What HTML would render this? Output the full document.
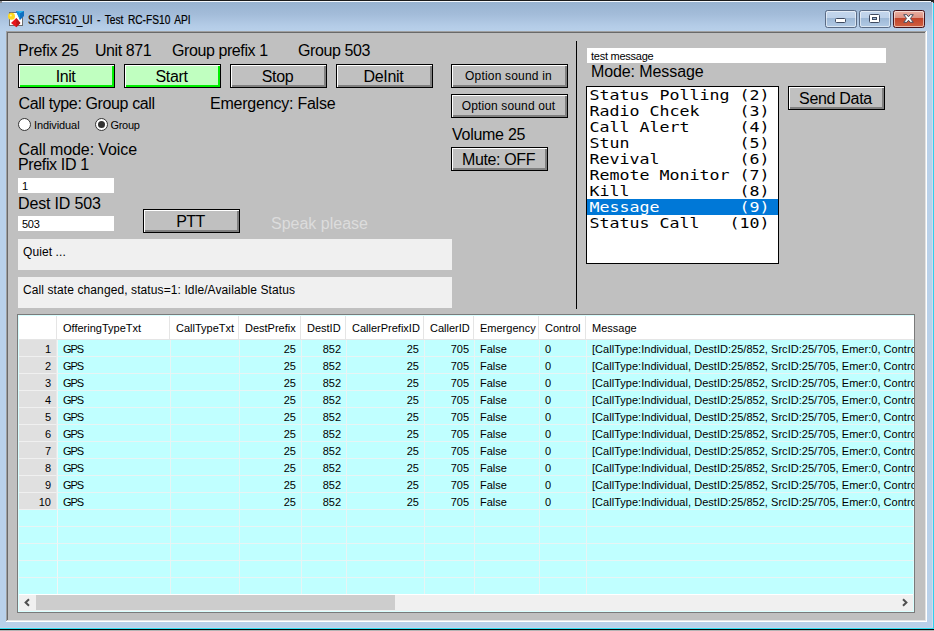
<!DOCTYPE html><html><head><meta charset="utf-8"><title>S.RCFS10_UI - Test RC-FS10 API</title><style>
*{box-sizing:border-box}
html,body{margin:0;padding:0}
body{width:934px;height:631px;overflow:hidden;position:relative;background:#b9d1ea;font-family:"Liberation Sans",sans-serif;color:#000}
.a{position:absolute}
#frame{left:0;top:0;width:934px;height:631px;background:#b9d1ea}
#tgrad{left:0;top:2px;width:933px;height:30px;background:linear-gradient(#98b3d0 0,#a3bcd9 40%,#b4cce7 80%,#b9d1ea 100%)}
#title{left:28px;top:13px;font-size:12px;line-height:15px;white-space:pre;transform-origin:0 50%;transform:scaleX(.848);word-spacing:2px;-webkit-text-stroke:.2px #000}
#client{left:8px;top:33px;width:917px;height:587px;background:#c0c0c0}
.l16{font-size:16px;line-height:18px;white-space:pre}
.btn{padding-right:2px;border:1px solid #000;background:#c0c0c0;font-size:16px;text-align:center;white-space:pre;box-shadow:inset 1px 1px 0 #fff,inset -2px -2px 0 #808080;line-height:20px;padding-top:2px}
.btn.g{background:#c0ffc0;box-shadow:inset 1px 1px 0 #fff,inset -2px -2px 0 #00f000}
.btn.s{font-size:12px;line-height:20px;padding-top:1px}
.tb{background:#fff;font-size:11px;letter-spacing:-.25px;line-height:15px;padding:1px 0 0 4px;white-space:pre;overflow:hidden}
.pnl{background:#f0f0f0;font-size:12px;line-height:14px;padding:6px 0 0 5px;white-space:pre;letter-spacing:.1px}
.rad{width:13px;height:13px;border-radius:50%;background:#fff;border:1px solid #333}
.rad.on::after{content:"";position:absolute;left:2px;top:2px;width:7px;height:7px;border-radius:50%;background:#333}
.rl{font-size:11px;line-height:13px;white-space:pre}
#lb{left:586px;top:86px;width:193px;height:178px;border:1px solid #000;background:#fff;overflow:hidden}
.li{position:absolute;left:0;width:191px;height:16px;font-family:"DejaVu Sans Mono","Liberation Mono",monospace;font-size:13.5px;line-height:16px;white-space:pre}
.li span{display:inline-block;transform-origin:0 50%;transform:scaleX(1.2305);padding-left:2px}
.li.sel{background:#0078d7;color:#fff}
#grid{left:17px;top:314px;width:898px;height:299px;border:1px solid #7a7a7a;background:#c0ffff;overflow:hidden;font-size:11px}
#grid .in{position:absolute;left:0;top:0;width:896px;height:297px;border:1px solid #d8ffff}
.hc{position:absolute;top:1px;height:24px;background:#fff;border-right:1px solid #e5e5e5;border-bottom:1px solid #e5e5e5;line-height:13px;padding:6px 0 0 6px;white-space:pre;overflow:hidden}
.rh{position:absolute;left:1px;width:38px;height:17px;background:#e0e0e0;border-right:1px solid #e8e8e8;border-bottom:1px solid #f0f0f0;text-align:right;padding:3px 5px 0 0;line-height:13px}
.c{position:absolute;height:17px;border-right:1px solid #e8f4f4;border-bottom:1px solid #e8f4f4;line-height:13px;padding:3px 5px 0 5px;white-space:pre;overflow:hidden}
.c.f{border-left:1px solid #f2f6f6}
.c.gps{letter-spacing:-1.1px}
.c.m{letter-spacing:.03px}
.c.r{text-align:right}
#sb{left:1px;top:279px;width:894px;height:17px;background:#f0f0f0;border-top:1px solid #fff}
#thumb{left:17px;top:0;width:359px;height:15px;background:#cdcdcd}
.cb{top:10px;width:32px;height:18px;border-radius:2.5px;border:1px solid #5a6b85;overflow:hidden}
.cb .hl{position:absolute;left:0;top:0;right:0;bottom:0;border:1px solid rgba(255,255,255,.55);border-radius:2px}
.cb.b{background:linear-gradient(#c3d6ec 0,#bdd1e9 44%,#9db8d6 45%,#b2cae5 100%)}
.cb.x{border-color:#47141c;background:linear-gradient(#eab0a3 0,#dc9080 44%,#c2432a 45%,#cf6142 100%)}
</style></head><body>
<div id="frame" class="a"></div>
<div id="tgrad" class="a"></div>
<div class="a" style="left:0;top:0;width:934px;height:1px;background:#1a1a1a"></div>
<div class="a" style="left:2px;top:1px;width:929px;height:1px;background:#f4f8fc"></div>
<div class="a" style="left:931px;top:1px;width:3px;height:1px;background:#2a2a2a"></div>
<div class="a" style="left:932px;top:2px;width:2px;height:1px;background:#3a3a3a"></div>
<div class="a" style="left:0;top:1px;width:2px;height:2px;background:#8a8f96"></div>
<div class="a" style="left:932px;top:2px;width:1px;height:626px;background:#cfdcee"></div>
<div class="a" style="left:933px;top:3px;width:1px;height:626px;background:#2fd0ee"></div>
<div class="a" style="left:0;top:627px;width:933px;height:1px;background:#c6d2ea"></div>
<div class="a" style="left:0;top:628px;width:934px;height:1px;background:#30dff2"></div>
<div class="a" style="left:0;top:629px;width:934px;height:1px;background:#050505"></div>
<div class="a" style="left:0;top:630px;width:934px;height:1px;background:#b4b4b4"></div>
<div class="a" style="left:6px;top:31px;width:921px;height:591px;background:#fff"></div>
<div class="a" style="left:6px;top:31px;width:920px;height:590px;background:#a0a0a0"></div>
<div class="a" style="left:7px;top:32px;width:919px;height:589px;background:#e3e3e3"></div>
<div class="a" style="left:7px;top:32px;width:918px;height:588px;background:#696969"></div>
<div id="client" class="a"></div>
<svg class="a" style="left:7px;top:10px" width="18" height="18" viewBox="0 0 18 18">
<rect x="2.5" y="2.5" width="13" height="13" fill="#fff" stroke="#6e6e6e"/>
<circle cx="4.5" cy="6.3" r="3.5" fill="#ffd91e"/><circle cx="3.8" cy="5.4" r="1" fill="#fff6b0"/>
<polygon points="9,1 17,1 17,6 13,10" fill="#0f6fc0"/><polygon points="9,1 17,1 13,3.2" fill="#2cb5ea"/><polygon points="9,1 13,3.2 13,10" fill="#1493dc"/>
<polygon points="9.3,8 13.4,13 9.3,17.3 4,13" fill="#e8141c"/><polygon points="9.3,8 13.4,13 9.3,17.3" fill="#b8161a"/>
</svg>
<div id="title" class="a">S.RCFS10_UI - Test RC-FS10 API</div>
<div class="a cb b" style="left:825px"><div class="hl"></div><svg class="a" style="left:9px;top:7px" width="13" height="7"><rect x="0.5" y="0.5" width="10" height="4" rx="1" fill="#fff" stroke="#3e4a60"/></svg></div>
<div class="a cb b" style="left:859px"><div class="hl"></div><svg class="a" style="left:9px;top:3px" width="13" height="11"><rect x="0.5" y="0.5" width="10" height="8" rx="1" fill="#fff" stroke="#3e4a60"/><rect x="3.5" y="3.5" width="4" height="2" fill="#9db8d6" stroke="#3e4a60"/></svg></div>
<div class="a cb x" style="left:893px"><div class="hl"></div><svg class="a" style="left:9px;top:3px" width="13" height="11" viewBox="0 0 13 11"><path d="M0.7 0.7 L3.9 0.7 L5.5 2.8 L7.1 0.7 L10.3 0.7 L7.4 4.5 L10.3 8.3 L7.1 8.3 L5.5 6.2 L3.9 8.3 L0.7 8.3 L3.6 4.5 Z" fill="#fff" stroke="#4a4f60" stroke-width="1" stroke-linejoin="round"/></svg></div>
<div class="a l16" style="left:18px;top:42px;letter-spacing:-0.29px;">Prefix 25</div>
<div class="a l16" style="left:95px;top:42px;letter-spacing:-0.43px;">Unit 871</div>
<div class="a l16" style="left:172px;top:42px;letter-spacing:-0.41px;">Group prefix 1</div>
<div class="a l16" style="left:298px;top:42px;letter-spacing:-0.4px;">Group 503</div>
<div class="a btn g" style="left:18px;top:64px;width:97px;height:24px;letter-spacing:-0.45px">Init</div>
<div class="a btn g" style="left:124px;top:64px;width:97px;height:24px;letter-spacing:-0.37px">Start</div>
<div class="a btn " style="left:230px;top:64px;width:97px;height:24px;letter-spacing:-0.3px">Stop</div>
<div class="a btn " style="left:336px;top:64px;width:97px;height:24px;letter-spacing:-0.3px">DeInit</div>
<div class="a l16" style="left:18.5px;top:95px;letter-spacing:-0.375px;">Call type: Group call</div>
<div class="a l16" style="left:210px;top:95px;letter-spacing:-0.22px;">Emergency: False</div>
<div class="a rad" style="left:18px;top:118px"></div><div class="a rl" style="left:34px;top:119px;letter-spacing:-.1px">Individual</div>
<div class="a rad on" style="left:95px;top:118px"></div><div class="a rl" style="left:110.5px;top:119px;letter-spacing:-.3px">Group</div>
<div class="a l16" style="left:18.5px;top:141px;letter-spacing:-0.1px;">Call mode: Voice</div>
<div class="a l16" style="left:18px;top:156px;letter-spacing:-0.36px;">Prefix ID 1</div>
<div class="a tb" style="left:18px;top:178px;width:96px;height:15px">1</div>
<div class="a l16" style="left:18px;top:195px;letter-spacing:-0.16px;">Dest ID 503</div>
<div class="a tb" style="left:18px;top:216px;width:96px;height:15px">503</div>
<div class="a btn " style="left:143px;top:209px;width:97px;height:24px;letter-spacing:-0.6px">PTT</div>
<div class="a l16" style="left:271px;top:215px;letter-spacing:0px;color:#dcdcdc">Speak please</div>
<div class="a pnl" style="left:18px;top:239px;width:434px;height:31px">Quiet ...</div>
<div class="a pnl" style="left:18px;top:277px;width:434px;height:31px">Call state changed, status=1: Idle/Available Status</div>
<div class="a btn s" style="left:451px;top:64px;width:117px;height:24px;letter-spacing:0.18px">Option sound in</div>
<div class="a btn s" style="left:451px;top:94px;width:117px;height:24px;letter-spacing:0.13px">Option sound out</div>
<div class="a l16" style="left:452px;top:126px;letter-spacing:-0.27px;">Volume 25</div>
<div class="a btn " style="left:451px;top:147px;width:97px;height:24px;letter-spacing:-0.37px">Mute: OFF</div>
<div class="a" style="left:576px;top:41px;width:1px;height:268px;background:#000"></div>
<div class="a tb" style="left:587px;top:48px;width:299px;height:15px">test message</div>
<div class="a l16" style="left:591px;top:63px;letter-spacing:-0.1px;">Mode: Message</div>
<div id="lb" class="a">
<div class="li" style="top:0px"><span>Status Polling (2)</span></div>
<div class="li" style="top:16px"><span>Radio Chcek    (3)</span></div>
<div class="li" style="top:32px"><span>Call Alert     (4)</span></div>
<div class="li" style="top:48px"><span>Stun           (5)</span></div>
<div class="li" style="top:64px"><span>Revival        (6)</span></div>
<div class="li" style="top:80px"><span>Remote Monitor (7)</span></div>
<div class="li" style="top:96px"><span>Kill           (8)</span></div>
<div class="li sel" style="top:112px"><span>Message        (9)</span></div>
<div class="li" style="top:128px"><span>Status Call   (10)</span></div>
</div>
<div class="a btn " style="left:788px;top:86px;width:97px;height:24px;letter-spacing:-0.3px">Send Data</div>
<div id="grid" class="a"><div class="in"></div>
<div class="hc" style="left:1px;width:38px"></div>
<div class="hc" style="left:39px;width:113px">OfferingTypeTxt</div>
<div class="hc" style="left:152px;width:69px">CallTypeTxt</div>
<div class="hc" style="left:221px;width:62px">DestPrefix</div>
<div class="hc" style="left:283px;width:45px">DestID</div>
<div class="hc" style="left:328px;width:78px">CallerPrefixID</div>
<div class="hc" style="left:406px;width:50px">CallerID</div>
<div class="hc" style="left:456px;width:65px">Emergency</div>
<div class="hc" style="left:521px;width:47px">Control</div>
<div class="hc" style="left:568px;width:400px">Message</div>
<div class="rh" style="top:25px">1</div>
<div class="c f gps" style="left:39px;top:25px;width:114px">GPS</div>
<div class="c" style="left:153px;top:25px;width:69px"></div>
<div class="c r" style="left:222px;top:25px;width:62px">25</div>
<div class="c r" style="left:284px;top:25px;width:45px">852</div>
<div class="c r" style="left:329px;top:25px;width:78px">25</div>
<div class="c r" style="left:407px;top:25px;width:50px">705</div>
<div class="c" style="left:457px;top:25px;width:65px">False</div>
<div class="c" style="left:522px;top:25px;width:47px">0</div>
<div class="c m" style="left:569px;top:25px;width:400px">[CallType:Individual, DestID:25/852, SrcID:25/705, Emer:0, Control:0, Status:1]</div>
<div class="rh" style="top:42px">2</div>
<div class="c f gps" style="left:39px;top:42px;width:114px">GPS</div>
<div class="c" style="left:153px;top:42px;width:69px"></div>
<div class="c r" style="left:222px;top:42px;width:62px">25</div>
<div class="c r" style="left:284px;top:42px;width:45px">852</div>
<div class="c r" style="left:329px;top:42px;width:78px">25</div>
<div class="c r" style="left:407px;top:42px;width:50px">705</div>
<div class="c" style="left:457px;top:42px;width:65px">False</div>
<div class="c" style="left:522px;top:42px;width:47px">0</div>
<div class="c m" style="left:569px;top:42px;width:400px">[CallType:Individual, DestID:25/852, SrcID:25/705, Emer:0, Control:0, Status:1]</div>
<div class="rh" style="top:59px">3</div>
<div class="c f gps" style="left:39px;top:59px;width:114px">GPS</div>
<div class="c" style="left:153px;top:59px;width:69px"></div>
<div class="c r" style="left:222px;top:59px;width:62px">25</div>
<div class="c r" style="left:284px;top:59px;width:45px">852</div>
<div class="c r" style="left:329px;top:59px;width:78px">25</div>
<div class="c r" style="left:407px;top:59px;width:50px">705</div>
<div class="c" style="left:457px;top:59px;width:65px">False</div>
<div class="c" style="left:522px;top:59px;width:47px">0</div>
<div class="c m" style="left:569px;top:59px;width:400px">[CallType:Individual, DestID:25/852, SrcID:25/705, Emer:0, Control:0, Status:1]</div>
<div class="rh" style="top:76px">4</div>
<div class="c f gps" style="left:39px;top:76px;width:114px">GPS</div>
<div class="c" style="left:153px;top:76px;width:69px"></div>
<div class="c r" style="left:222px;top:76px;width:62px">25</div>
<div class="c r" style="left:284px;top:76px;width:45px">852</div>
<div class="c r" style="left:329px;top:76px;width:78px">25</div>
<div class="c r" style="left:407px;top:76px;width:50px">705</div>
<div class="c" style="left:457px;top:76px;width:65px">False</div>
<div class="c" style="left:522px;top:76px;width:47px">0</div>
<div class="c m" style="left:569px;top:76px;width:400px">[CallType:Individual, DestID:25/852, SrcID:25/705, Emer:0, Control:0, Status:1]</div>
<div class="rh" style="top:93px">5</div>
<div class="c f gps" style="left:39px;top:93px;width:114px">GPS</div>
<div class="c" style="left:153px;top:93px;width:69px"></div>
<div class="c r" style="left:222px;top:93px;width:62px">25</div>
<div class="c r" style="left:284px;top:93px;width:45px">852</div>
<div class="c r" style="left:329px;top:93px;width:78px">25</div>
<div class="c r" style="left:407px;top:93px;width:50px">705</div>
<div class="c" style="left:457px;top:93px;width:65px">False</div>
<div class="c" style="left:522px;top:93px;width:47px">0</div>
<div class="c m" style="left:569px;top:93px;width:400px">[CallType:Individual, DestID:25/852, SrcID:25/705, Emer:0, Control:0, Status:1]</div>
<div class="rh" style="top:110px">6</div>
<div class="c f gps" style="left:39px;top:110px;width:114px">GPS</div>
<div class="c" style="left:153px;top:110px;width:69px"></div>
<div class="c r" style="left:222px;top:110px;width:62px">25</div>
<div class="c r" style="left:284px;top:110px;width:45px">852</div>
<div class="c r" style="left:329px;top:110px;width:78px">25</div>
<div class="c r" style="left:407px;top:110px;width:50px">705</div>
<div class="c" style="left:457px;top:110px;width:65px">False</div>
<div class="c" style="left:522px;top:110px;width:47px">0</div>
<div class="c m" style="left:569px;top:110px;width:400px">[CallType:Individual, DestID:25/852, SrcID:25/705, Emer:0, Control:0, Status:1]</div>
<div class="rh" style="top:127px">7</div>
<div class="c f gps" style="left:39px;top:127px;width:114px">GPS</div>
<div class="c" style="left:153px;top:127px;width:69px"></div>
<div class="c r" style="left:222px;top:127px;width:62px">25</div>
<div class="c r" style="left:284px;top:127px;width:45px">852</div>
<div class="c r" style="left:329px;top:127px;width:78px">25</div>
<div class="c r" style="left:407px;top:127px;width:50px">705</div>
<div class="c" style="left:457px;top:127px;width:65px">False</div>
<div class="c" style="left:522px;top:127px;width:47px">0</div>
<div class="c m" style="left:569px;top:127px;width:400px">[CallType:Individual, DestID:25/852, SrcID:25/705, Emer:0, Control:0, Status:1]</div>
<div class="rh" style="top:144px">8</div>
<div class="c f gps" style="left:39px;top:144px;width:114px">GPS</div>
<div class="c" style="left:153px;top:144px;width:69px"></div>
<div class="c r" style="left:222px;top:144px;width:62px">25</div>
<div class="c r" style="left:284px;top:144px;width:45px">852</div>
<div class="c r" style="left:329px;top:144px;width:78px">25</div>
<div class="c r" style="left:407px;top:144px;width:50px">705</div>
<div class="c" style="left:457px;top:144px;width:65px">False</div>
<div class="c" style="left:522px;top:144px;width:47px">0</div>
<div class="c m" style="left:569px;top:144px;width:400px">[CallType:Individual, DestID:25/852, SrcID:25/705, Emer:0, Control:0, Status:1]</div>
<div class="rh" style="top:161px">9</div>
<div class="c f gps" style="left:39px;top:161px;width:114px">GPS</div>
<div class="c" style="left:153px;top:161px;width:69px"></div>
<div class="c r" style="left:222px;top:161px;width:62px">25</div>
<div class="c r" style="left:284px;top:161px;width:45px">852</div>
<div class="c r" style="left:329px;top:161px;width:78px">25</div>
<div class="c r" style="left:407px;top:161px;width:50px">705</div>
<div class="c" style="left:457px;top:161px;width:65px">False</div>
<div class="c" style="left:522px;top:161px;width:47px">0</div>
<div class="c m" style="left:569px;top:161px;width:400px">[CallType:Individual, DestID:25/852, SrcID:25/705, Emer:0, Control:0, Status:1]</div>
<div class="rh" style="top:178px">10</div>
<div class="c f gps" style="left:39px;top:178px;width:114px">GPS</div>
<div class="c" style="left:153px;top:178px;width:69px"></div>
<div class="c r" style="left:222px;top:178px;width:62px">25</div>
<div class="c r" style="left:284px;top:178px;width:45px">852</div>
<div class="c r" style="left:329px;top:178px;width:78px">25</div>
<div class="c r" style="left:407px;top:178px;width:50px">705</div>
<div class="c" style="left:457px;top:178px;width:65px">False</div>
<div class="c" style="left:522px;top:178px;width:47px">0</div>
<div class="c m" style="left:569px;top:178px;width:400px">[CallType:Individual, DestID:25/852, SrcID:25/705, Emer:0, Control:0, Status:1]</div>
<div class="c" style="left:1px;top:195px;width:38px;border-right:0"></div>
<div class="c f" style="left:39px;top:195px;width:114px"></div>
<div class="c" style="left:153px;top:195px;width:69px"></div>
<div class="c r" style="left:222px;top:195px;width:62px"></div>
<div class="c r" style="left:284px;top:195px;width:45px"></div>
<div class="c r" style="left:329px;top:195px;width:78px"></div>
<div class="c r" style="left:407px;top:195px;width:50px"></div>
<div class="c" style="left:457px;top:195px;width:65px"></div>
<div class="c" style="left:522px;top:195px;width:47px"></div>
<div class="c" style="left:569px;top:195px;width:400px"></div>
<div class="c" style="left:1px;top:212px;width:38px;border-right:0"></div>
<div class="c f" style="left:39px;top:212px;width:114px"></div>
<div class="c" style="left:153px;top:212px;width:69px"></div>
<div class="c r" style="left:222px;top:212px;width:62px"></div>
<div class="c r" style="left:284px;top:212px;width:45px"></div>
<div class="c r" style="left:329px;top:212px;width:78px"></div>
<div class="c r" style="left:407px;top:212px;width:50px"></div>
<div class="c" style="left:457px;top:212px;width:65px"></div>
<div class="c" style="left:522px;top:212px;width:47px"></div>
<div class="c" style="left:569px;top:212px;width:400px"></div>
<div class="c" style="left:1px;top:229px;width:38px;border-right:0"></div>
<div class="c f" style="left:39px;top:229px;width:114px"></div>
<div class="c" style="left:153px;top:229px;width:69px"></div>
<div class="c r" style="left:222px;top:229px;width:62px"></div>
<div class="c r" style="left:284px;top:229px;width:45px"></div>
<div class="c r" style="left:329px;top:229px;width:78px"></div>
<div class="c r" style="left:407px;top:229px;width:50px"></div>
<div class="c" style="left:457px;top:229px;width:65px"></div>
<div class="c" style="left:522px;top:229px;width:47px"></div>
<div class="c" style="left:569px;top:229px;width:400px"></div>
<div class="c" style="left:1px;top:246px;width:38px;border-right:0"></div>
<div class="c f" style="left:39px;top:246px;width:114px"></div>
<div class="c" style="left:153px;top:246px;width:69px"></div>
<div class="c r" style="left:222px;top:246px;width:62px"></div>
<div class="c r" style="left:284px;top:246px;width:45px"></div>
<div class="c r" style="left:329px;top:246px;width:78px"></div>
<div class="c r" style="left:407px;top:246px;width:50px"></div>
<div class="c" style="left:457px;top:246px;width:65px"></div>
<div class="c" style="left:522px;top:246px;width:47px"></div>
<div class="c" style="left:569px;top:246px;width:400px"></div>
<div class="c" style="left:1px;top:263px;width:38px;border-right:0"></div>
<div class="c f" style="left:39px;top:263px;width:114px"></div>
<div class="c" style="left:153px;top:263px;width:69px"></div>
<div class="c r" style="left:222px;top:263px;width:62px"></div>
<div class="c r" style="left:284px;top:263px;width:45px"></div>
<div class="c r" style="left:329px;top:263px;width:78px"></div>
<div class="c r" style="left:407px;top:263px;width:50px"></div>
<div class="c" style="left:457px;top:263px;width:65px"></div>
<div class="c" style="left:522px;top:263px;width:47px"></div>
<div class="c" style="left:569px;top:263px;width:400px"></div>
<div id="sb" class="a"><div id="thumb" class="a"></div>
<svg class="a" style="left:4px;top:3px" width="9" height="9" viewBox="0 0 9 9"><path d="M6 1.3 L2.6 4.5 L6 7.7" fill="none" stroke="#505050" stroke-width="2"/></svg>
<svg class="a" style="left:881px;top:3px" width="9" height="9" viewBox="0 0 9 9"><path d="M3 1.3 L6.4 4.5 L3 7.7" fill="none" stroke="#505050" stroke-width="2"/></svg>
</div></div>
</body></html>
